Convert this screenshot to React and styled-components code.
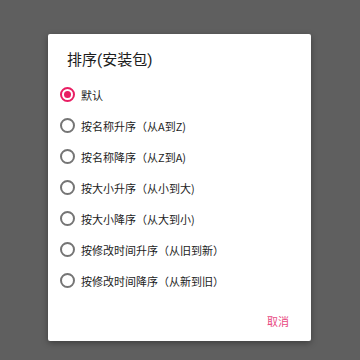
import React, { useState } from 'react'
import styled, { createGlobalStyle } from 'styled-components'

const GlobalStyle = createGlobalStyle`
    html, body {
        margin: 0;
        padding: 0;
        background: #5f5f5f;
        font-family: Roboto, "Noto Sans CJK SC", sans-serif;
    }
`

const Screen = styled.div`
    width: 360px;
    height: 360px;
    background: #5f5f5f;
    padding: 34px 0 0 48px;
    box-sizing: border-box;
`

const Dialog = styled.div`
    width: 263px;
    height: 307px;
    background: #ffffff;
    border-radius: 2px;
    box-shadow: 0 2px 6px rgba(0, 0, 0, 0.35);
    display: flex;
    flex-direction: column;
    box-sizing: border-box;
`

const Title = styled.h2`
    margin: 0;
    padding: 16px 0 0 19px;
    font-size: 15px;
    line-height: 20px;
    font-weight: 400;
    color: #1c1c1c;
`

const List = styled.div`
    display: flex;
    flex-direction: column;
    margin-top: 9px;
    padding-left: 12px;
`

const Row = styled.label`
    display: flex;
    align-items: center;
    gap: 6px;
    height: 31px;
    cursor: pointer;
`

const Radio = styled.span`
    width: 15px;
    height: 15px;
    border-radius: 50%;
    border: 2px solid ${p => (p.checked ? '#e91e63' : '#757575')};
    box-sizing: border-box;
    display: flex;
    align-items: center;
    justify-content: center;

    &::after {
        content: '';
        width: 7px;
        height: 7px;
        border-radius: 50%;
        background: #e91e63;
        display: ${p => (p.checked ? 'block' : 'none')};
    }
`

const Label = styled.span`
    font-size: 11px;
    color: #1c1c1c;
    font-family: "Noto Sans CJK SC", sans-serif;
`

const Actions = styled.div`
    margin-top: auto;
    display: flex;
    justify-content: flex-end;
    padding: 0 22px 12px 0;
`

const TextButton = styled.button`
    border: none;
    background: none;
    padding: 0;
    font-size: 11px;
    line-height: 16px;
    color: #e8487f;
    font-family: "Noto Sans CJK SC", sans-serif;
    cursor: pointer;
`

const options = [
    '默认',
    '按名称升序（从A到Z)',
    '按名称降序（从Z到A)',
    '按大小升序（从小到大)',
    '按大小降序（从大到小)',
    '按修改时间升序（从旧到新）',
    '按修改时间降序（从新到旧）',
]

export default function App() {
    const [selected, setSelected] = useState(0)
    return (
        <>
            <GlobalStyle />
            <Screen>
                <Dialog>
                    <Title>排序(安装包)</Title>
                    <List>
                        {options.map((opt, i) => (
                            <Row key={opt} onClick={() => setSelected(i)}>
                                <Radio checked={selected === i} />
                                <Label>{opt}</Label>
                            </Row>
                        ))}
                    </List>
                    <Actions>
                        <TextButton>取消</TextButton>
                    </Actions>
                </Dialog>
            </Screen>
        </>
    )
}
